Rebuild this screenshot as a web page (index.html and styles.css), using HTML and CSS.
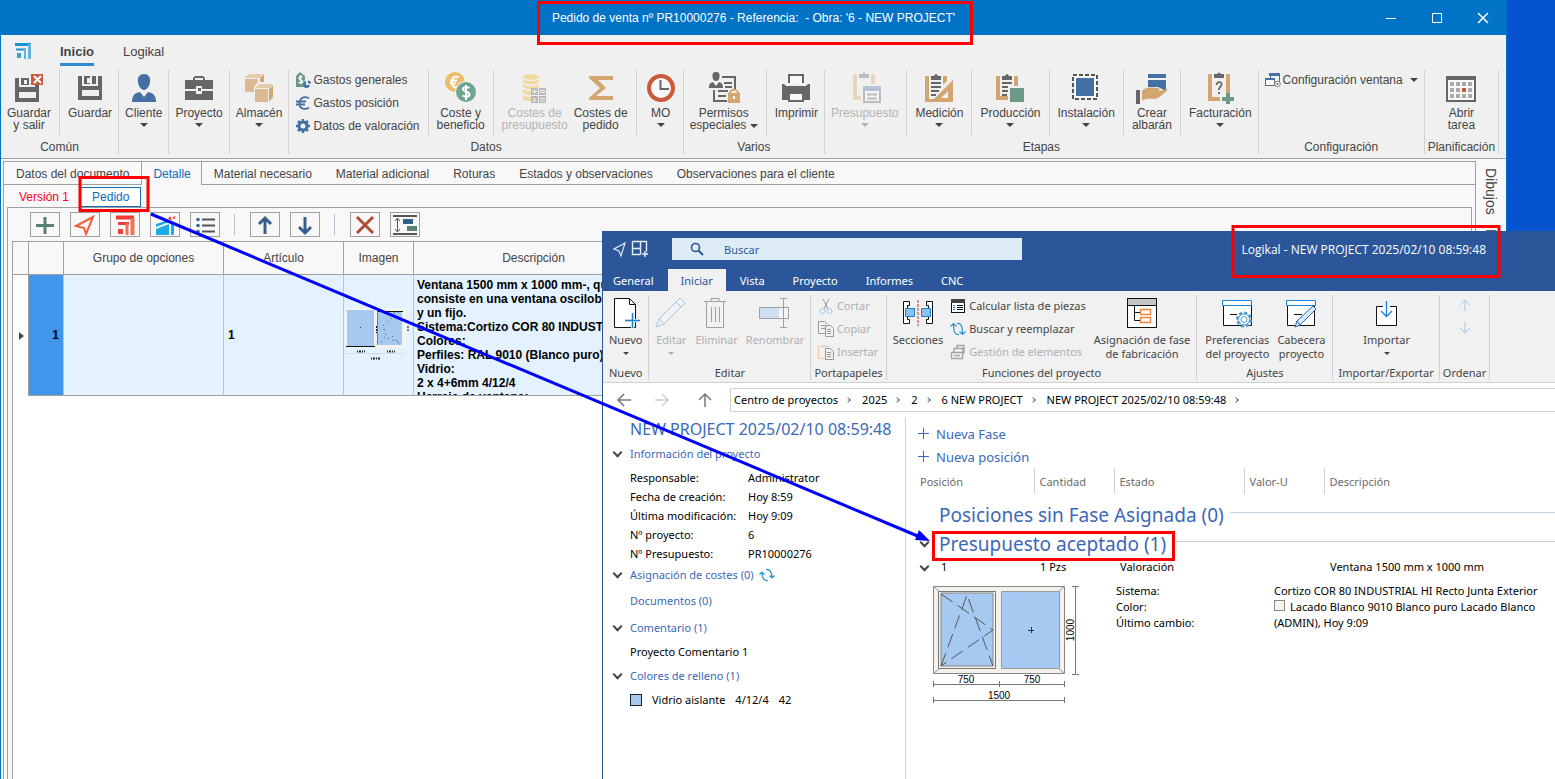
FILE: index.html
```html
<!DOCTYPE html>
<html lang="es">
<head>
    <meta charset="UTF-8">
    <meta name="viewport" content="width=device-width, initial-scale=1.0">
    <title>Pedido de venta nº PR10000276</title>
    <link rel="stylesheet" href="styles.css">
</head>
<body>
<main class="desktop">

    <!-- Ventana del pedido -->
    <section class="erp">
        <header class="erp-title">
            <h1>Pedido de venta nº PR10000276 - Referencia:&nbsp; - Obra: '6 - NEW PROJECT'</h1>
            <div class="win-controls">
                <button aria-label="Minimizar"><svg width="12" height="12"><path d="M1 6.500h10" stroke="#fff"/></svg></button>
                <button aria-label="Maximizar"><svg width="12" height="12"><rect x="1.500" y="1.500" width="9" height="9" fill="none" stroke="#fff"/></svg></button>
                <button aria-label="Cerrar"><svg width="12" height="12"><path d="M1 1l10 10M11 1L1 11" stroke="#fff" stroke-width="1.500"/></svg></button>
            </div>
        </header>

        <nav class="erp-menu">
            <svg class="logo" width="16" height="16"><path d="M0 1.500h16" stroke="#1496d4" stroke-width="3"/><path d="M14.500 1v15" stroke="#63b5dc" stroke-width="3"/><path d="M1 6.500h10" stroke="#1496d4" stroke-width="2"/><path d="M10 6v10" stroke="#63b5dc" stroke-width="2"/><path d="M2 10h4v5H2z" fill="#3aa3d6"/></svg>
            <a href="#" class="active">Inicio</a>
            <a href="#">Logikal</a>
        </nav>

        <div class="ribbon">
            <div class="group">
                <div class="items">
                    <button class="big">
                        <svg width="32" height="32"><path d="M2 6h4v9h16v-4h4v19H2z" fill="#666"/><path d="M8 6h8v7H8z" fill="#666"/><path d="M11 8h3v4h-3zM6 20h17v6H6z" fill="#f0f0f0"/><path d="M18 2h12v11H18z" fill="#c75b3c"/><path d="M21 4l7 7m0-7l-7 7" stroke="#fff" stroke-width="2"/></svg>
                        <span>Guardar<br>y salir</span>
                    </button>
                    <i class="sep"></i>
                    <button class="big">
                        <svg width="32" height="32"><path d="M4 4h4v10h16V4h4v24H4z" fill="#666"/><path d="M10 4h12v8H10z" fill="#666"/><path d="M13 6h3v5h-3zM16 4h2v8h-2zM8 18h17v6H8z" fill="#f0f0f0"/></svg>
                        <span>Guardar</span>
                    </button>
                </div>
                <p class="group-name">Común</p>
            </div>
            <div class="group">
                <div class="items">
                    <button class="big">
                        <svg width="32" height="32"><path d="M16 2c4 0 7 3 6 8-.5 4-3 8-6 8s-5.500-4-6-8c-1-5 2-8 6-8z" fill="#4470a3"/><path d="M4 30c0-7 3-9 8-10l4 5 4-5c5 1 8 3 8 10z" fill="#4470a3"/></svg>
                        <span>Cliente</span><i class="caret"></i>
                    </button>
                </div>
            </div>
            <div class="group">
                <div class="items">
                    <button class="big">
                        <svg width="32" height="32"><path d="M2 8h8V6l2-2h8l2 2v2h8v9H19v-3h-6v3H2zM2 19h11v3h6v-3h11v9H2z" fill="#666"/><path d="M12 6h8v2h-8z" fill="#f0f0f0"/><path d="M15 16h3v3h-3z" fill="#666"/></svg>
                        <span>Proyecto</span><i class="caret"></i>
                    </button>
                </div>
            </div>
            <div class="group">
                <div class="items">
                    <button class="big">
                        <svg width="32" height="32"><path d="M6 2h14l-4 4H2z" fill="#e5cba9"/><path d="M2 7h13v3l-4 5v5H2z" fill="#dcb992"/><path d="M17 6l4-4v8h-4z" fill="#d3a571"/><path d="M16 12h14l-4 4H12z" fill="#e5cba9"/><path d="M12 17h13v13H12z" fill="#dcb992"/><path d="M26 17l4-4v12l-4 5z" fill="#d3a571"/></svg>
                        <span>Almacén</span><i class="caret"></i>
                    </button>
                </div>
            </div>
            <div class="group">
                <div class="items">
                    <div class="list">
                        <button class="small"><svg width="16" height="16"><path d="M1 4l4-4 5 4v11H1z" fill="#6a9a87"/><path d="M7.500 5C5 4 3.500 5 4 6.500S8 8 7.500 10 4.500 11 3.500 10M5.700 3v9" fill="none" stroke="#fff" stroke-width="1.200"/><circle cx="12" cy="12" r="4" fill="#f0f0f0"/><path d="M11 9v4h4a3.500 3.500 0 1 1-4-4zM13 8.500a3 3 0 0 1 3 3h-3z" fill="#4470a3"/></svg>Gastos generales</button>
                        <button class="small"><svg width="16" height="16"><path d="M14 3.500C12 1.500 5 1 4.500 8S11 14.500 14 12.500M1 6.500h10M1 9.500h9" fill="none" stroke="#4470a3" stroke-width="1.800"/></svg>Gastos posición</button>
                        <button class="small"><svg width="16" height="16"><circle cx="8" cy="8" r="4" fill="none" stroke="#4470a3" stroke-width="3"/><path d="M8 1v3M8 12v3M1 8h3M12 8h3M3 3l2 2M11 11l2 2M3 13l2-2M11 5l2-2" stroke="#4470a3" stroke-width="2.500"/></svg>Datos de valoración</button>
                    </div>
                    <i class="sep"></i>
                    <button class="big">
                        <svg width="32" height="32"><circle cx="10" cy="10" r="10" fill="#ecbd69"/><path d="M14 5.500c-3-2-7-1-7 4.500s4 6.500 7 4.500M5 8.500h7M5 11.500h6" fill="none" stroke="#fff" stroke-width="2"/><circle cx="21" cy="20" r="11" fill="#f0f0f0"/><circle cx="21" cy="20" r="10" fill="#6fa58f"/><path d="M24.500 16c-2-1.500-7-1-6.500 1.500s7 2 6.500 5-5 2.500-7 1M21 13v15" fill="none" stroke="#fff" stroke-width="2"/></svg>
                        <span>Coste y<br>beneficio</span>
                    </button>
                    <i class="sep"></i>
                    <button class="big off">
                        <svg width="32" height="32"><g fill="#f3d9a0"><ellipse cx="12" cy="5" rx="8" ry="3"/><path d="M4 7c3 3 13 3 16 0v3c-3 3-13 3-16 0zM4 12c3 3 13 3 16 0v3c-3 3-13 3-16 0zM4 17c3 2 6 2 8 2v4c-3 0-6 0-8-2zM4 23c3 2 6 2 8 2v4c-3 0-6 0-8-2z"/></g><path d="M12 16h15v15H12z" fill="#b9b9b9"/><path d="M19.500 16v15M12 23.500h15M13 19.500h5M15.500 17v5M21 18.500h5M21 20.500h5M14 26l3 4m0-4l-3 4M21 26.500h5M21 29h5" stroke="#f0f0f0"/></svg>
                        <span>Costes de<br>presupuesto</span>
                    </button>
                    <button class="big">
                        <svg width="32" height="32"><path d="M4 4h24v4H13l8 8-10 8h17v4H4v-2l11-10L4 6z" fill="#d3a571"/></svg>
                        <span>Costes de<br>pedido</span>
                    </button>
                    <i class="sep"></i>
                    <button class="big">
                        <svg width="32" height="32"><circle cx="16" cy="16" r="12" fill="#f8f8f8" stroke="#c75b3c" stroke-width="4"/><path d="M15.500 8v9H24" fill="none" stroke="#666" stroke-width="2"/></svg>
                        <span>MO</span><i class="caret"></i>
                    </button>
                </div>
                <p class="group-name">Datos</p>
            </div>
            <div class="group">
                <div class="items">
                    <button class="big">
                        <svg width="32" height="32"><path d="M8 0c3 0 4 2 3.500 5S10 9 8 9 5 8 4.500 5 5 0 8 0z" fill="#666"/><path d="M1 16c0-4 1-5 4-6l3 4 3-4c3 1 4 2 4 6z" fill="#666"/><path d="M14 5h13v12M16 11h8M17 15h7M6 18v11h13M10 19h10M10 24h8" fill="none" stroke="#666" stroke-width="2"/><path d="M20 21h12v10H20z" fill="#d3a571"/><path d="M22 22v-2q4-5 8 0v2" fill="none" stroke="#d3a571" stroke-width="2"/><path d="M25 24h2v3h-2z" fill="#fff"/></svg>
                        <span>Permisos<br>especiales <i class="tri"></i></span>
                    </button>
                    <i class="sep"></i>
                    <button class="big">
                        <svg width="32" height="32"><path d="M9 11V3h14v8" fill="#f8f8f8" stroke="#666" stroke-width="2"/><path d="M2 12h2l2 2h20l2-2h2v16H2z" fill="#666"/><path d="M9 21h14v8H9z" fill="#f8f8f8" stroke="#666" stroke-width="2"/></svg>
                        <span>Imprimir</span>
                    </button>
                </div>
                <p class="group-name">Varios</p>
            </div>
            <div class="group">
                <div class="items">
                    <button class="big off">
                        <svg width="32" height="32"><path d="M4 2h4v22h4v4H4zM22 2h4v10h-4z" fill="#ead6c0"/><path d="M10 2h3q2-3 4 0h3v4H10z" fill="#bcbcbc"/><path d="M15 16h16v14H15z" fill="#f4f4f4" stroke="#bbb" stroke-width="2"/><path d="M14 14h18v5H14z" fill="#b4c3d6"/><path d="M18 22.500h10M18 26.500h10" stroke="#bbb" stroke-width="2"/></svg>
                        <span>Presupuesto</span><i class="caret"></i>
                    </button>
                    <i class="sep"></i>
                    <button class="big">
                        <svg width="32" height="32"><path d="M2 4h4v23h6l-2 3H2zM20 4h4v5l-4 4z" fill="#d3a571"/><path d="M8 4h3q2-4 4 0h3v4H8z" fill="#666"/><path d="M8 11h10M8 15h10M8 19h8M8 23h5" stroke="#666" stroke-width="2"/><path d="M30 8v22H8zM25 19l-7 7h7z" fill="#d3a571" fill-rule="evenodd"/></svg>
                        <span>Medición</span><i class="caret"></i>
                    </button>
                    <i class="sep"></i>
                    <button class="big">
                        <svg width="32" height="32"><path d="M2 4h4v20h8v4H2zM20 4h4v10h-4z" fill="#d3a571"/><path d="M8 4h3q2-4 4 0h3v4H8z" fill="#666"/><path d="M8 11h10M8 15h6M8 19h6M8 23h5" stroke="#666" stroke-width="2"/><path d="M16 16h14v14H16z" fill="#6a9a87"/></svg>
                        <span>Producción</span><i class="caret"></i>
                    </button>
                    <i class="sep"></i>
                    <button class="big">
                        <svg width="32" height="32"><rect x="3" y="3" width="24" height="24" fill="#f8f8f8" stroke="#555" stroke-width="2" stroke-dasharray="4 2"/><path d="M6 6h18v18H6z" fill="#4470a3"/></svg>
                        <span>Instalación</span><i class="caret"></i>
                    </button>
                    <i class="sep"></i>
                    <button class="big">
                        <svg width="32" height="32"><path d="M12 2h18v4H12zM12 8h18v11l-8-4H12z" fill="#4470a3"/><path d="M0 18h4v14H0z" fill="#666"/><path d="M6 19c5-5 9-3 16-3 2 0 2 3 0 3h-5 6l8-2c2 1-5 6-9 9-7 2-11-1-16 3z" fill="#d3a571"/></svg>
                        <span>Crear<br>albarán</span>
                    </button>
                    <i class="sep"></i>
                    <button class="big">
                        <svg width="32" height="32"><path d="M4 2h4v23h8v4H4zM22 2h4v20h-4z" fill="#d3a571"/><path d="M10 2h3q2-3 4 0h3v4H10z" fill="#666"/><path d="M12.500 13c0-4 6-3.500 5 0-.5 1.500-2.500 2-2.500 5M15 20v2" fill="none" stroke="#666" stroke-width="1.800"/><path d="M24 21v12M18 27h12" stroke="#6a9a87" stroke-width="4"/></svg>
                        <span>Facturación</span><i class="caret"></i>
                    </button>
                </div>
                <p class="group-name">Etapas</p>
            </div>
            <div class="group">
                <div class="items">
                    <div class="list">
                        <button class="small"><svg width="16" height="16"><path d="M5.500 9V2h9v8" fill="none" stroke="#666"/><path d="M4 1h11v3H4z" fill="#4470a3"/><rect x=".5" y="6.500" width="9" height="7" fill="#f8f8f8" stroke="#666"/><path d="M0 6h10v2H0z" fill="#4470a3"/><circle cx="12.500" cy="12" r="2.800" fill="#f8f8f8" stroke="#888"/><circle cx="12.500" cy="12" r="1" fill="#666"/></svg>Configuración ventana<i class="tri"></i></button>
                    </div>
                </div>
                <p class="group-name">Configuración</p>
            </div>
            <div class="group">
                <div class="items">
                    <button class="big">
                        <svg width="32" height="32"><rect x="2" y="5" width="28" height="24" fill="#f8f8f8" stroke="#666" stroke-width="2"/><path d="M1 4h30v4H1z" fill="#666"/><path d="M5 12h22M5 18h22M5 24h22" stroke="#aaa" stroke-width="4" stroke-dasharray="4 2"/><path d="M17 16h4v4h-4z" fill="#c75b3c"/></svg>
                        <span>Abrir<br>tarea</span>
                    </button>
                </div>
                <p class="group-name">Planificación</p>
            </div>
        </div>

        <div class="erp-body">
            <div class="doc">
                <nav class="tabs">
                    <a href="#">Datos del documento</a>
                    <a href="#" class="active">Detalle</a>
                    <a href="#">Material necesario</a>
                    <a href="#">Material adicional</a>
                    <a href="#">Roturas</a>
                    <a href="#">Estados y observaciones</a>
                    <a href="#">Observaciones para el cliente</a>
                </nav>
                <div class="doc-inner">
                    <nav class="versions">
                        <a href="#" class="version">Versión 1</a>
                        <a href="#" class="order">Pedido</a>
                    </nav>
                    <div class="detail">
                        <div class="toolbar">
                            <button aria-label="Añadir"><svg width="24" height="22"><path d="M12 3v17M3 11.500h18" stroke="#588170" stroke-width="3"/></svg></button>
                            <button aria-label="Enviar"><svg width="24" height="22"><path d="M20 3L3 12l8 2 2 6z" fill="none" stroke="#f55f38" stroke-width="2"/></svg></button>
                            <button aria-label="Logikal"><svg width="24" height="22"><path d="M3 3.500h18" stroke="#f03b36" stroke-width="4"/><path d="M19.500 4v17" stroke="#f3725a" stroke-width="4"/><path d="M5 9.500h11" stroke="#f03b36" stroke-width="3"/><path d="M14 9v12" stroke="#f3725a" stroke-width="3"/><path d="M5 15h5v5H5z" fill="#e8453a"/></svg></button>
                            <button aria-label="Actualizar dibujo"><svg width="24" height="22"><path d="M3 10l12-4 1 2-13 5zM3 15l13-5v11H3zM18 9l3-1v13h-3z" fill="#1fabe6"/><path d="M15 5l2-3 2 4zM19 4l3-2v3z" fill="#ee3b33"/></svg></button>
                            <button aria-label="Lista"><svg width="24" height="22"><path d="M9 5.500h13M9 11.500h13M9 17.500h13" stroke="#555" stroke-width="2"/><g fill="#3c6493"><circle cx="5" cy="5.500" r="1.800"/><circle cx="5" cy="11.500" r="1.800"/><circle cx="5" cy="17.500" r="1.800"/></g></svg></button>
                            <i class="bar"></i>
                            <button aria-label="Subir"><svg width="24" height="22"><path d="M12 20V4M6 10l6-6 6 6" fill="none" stroke="#355f8f" stroke-width="3"/></svg></button>
                            <button aria-label="Bajar"><svg width="24" height="22"><path d="M12 3v16M6 13l6 6 6-6" fill="none" stroke="#355f8f" stroke-width="3"/></svg></button>
                            <i class="bar"></i>
                            <button aria-label="Eliminar"><svg width="24" height="22"><path d="M4 3l16 16M20 3L4 19" stroke="#b04a32" stroke-width="3"/></svg></button>
                            <button aria-label="Ajustar"><svg width="24" height="22"><path d="M0 2h24M0 20h24" stroke="#555" stroke-width="2"/><path d="M4.500 5v12M2 7l2.500-3L7 7M2 15l2.500 3L7 15" fill="none" stroke="#555"/><path d="M10 5h10v5H10z" fill="#355f8f"/><path d="M14 12h10v5H14z" fill="#588170"/></svg></button>
                        </div>
                        <div class="grid-wrap">
                            <table class="grid">
                                <colgroup><col class="w-mark"><col class="w-num"><col class="w-opt"><col class="w-art"><col class="w-img"><col class="w-desc"></colgroup>
                                <thead>
                                    <tr><th></th><th></th><th>Grupo de opciones</th><th>Artículo</th><th>Imagen</th><th>Descripción</th></tr>
                                </thead>
                                <tbody>
                                    <tr>
                                        <td class="mark"><svg width="5" height="8"><path d="M0 0l5 4-5 4z" fill="#444"/></svg></td>
                                        <td class="num">1</td>
                                        <td></td>
                                        <td class="art">1</td>
                                        <td class="thumb">
                                            <svg width="66" height="54"><path d="M0 0h61v40H0z" fill="#f3f3f0"/><path d="M2 2h27v36H2zM33 3h24v34H33z" fill="#a5c9f1"/><path d="M1 38.500h29M33 3.500h25" stroke="#111"/><path d="M32.500 3v34" stroke="#777"/><path d="M44 6l10-2-16 14 4 12 14 5M36 34l4-5M47 28l8 9M15.500 19v3" fill="none" stroke="#345" stroke-dasharray="1 4"/><path d="M31.500 18v7M63 18v6" stroke="#111" stroke-dasharray="2 1"/><path d="M12 43.500h8M42 43.500h8M26 50.500h10" stroke="#222" stroke-width="2" stroke-dasharray="1 1 2 1"/><path d="M0 45.500h60" stroke="#d5deea"/></svg>
                                        </td>
                                        <td class="desc"><div>Ventana 1500 mm x 1000 mm-, qu<br>consiste en una ventana oscilob<br>y un fijo.<br>Sistema:Cortizo COR 80 INDUST<br>Colores:<br>Perfiles: RAL 9010 (Blanco puro)<br>Vidrio:<br>2 x 4+6mm 4/12/4<br>Herraje de ventana:</div></td>
                                    </tr>
                                </tbody>
                            </table>
                        </div>
                    </div>
                </div>
            </div>
            <aside class="side"><a href="#">Dibujos</a><a href="#">D</a></aside>
        </div>
    </section>

    <!-- Ventana de Logikal -->
    <section class="logikal">
        <header class="lk-title">
            <svg width="36" height="18"><path d="M12 3L1 9l5 2 2 5z" fill="none" stroke="#dfe8f5" stroke-width="1.200"/><path d="M19.500 1.500h14v10M19.500 1.500v13h8M27.500 1.500v13M19.500 8.500h8M32 11v6M29 14h6" fill="none" stroke="#e6edf7" stroke-width="1.400"/></svg>
            <label class="search">
                <svg width="14" height="14"><circle cx="5.500" cy="5.500" r="4" fill="none" stroke="#2b579a" stroke-width="1.600"/><path d="M8.500 8.500l4.500 4.500" stroke="#2b579a" stroke-width="2"/></svg>
                <input type="text" placeholder="Buscar" aria-label="Buscar">
            </label>
            <h2>Logikal - NEW PROJECT 2025/02/10 08:59:48</h2>
        </header>
        <nav class="lk-tabs">
            <a href="#">General</a>
            <a href="#" class="active">Iniciar</a>
            <a href="#">Vista</a>
            <a href="#">Proyecto</a>
            <a href="#">Informes</a>
            <a href="#">CNC</a>
        </nav>

        <div class="lk-ribbon">
            <div class="lk-group">
                <div class="items">
                    <button class="lk-big">
                        <svg width="32" height="32"><path d="M4.500 1.500h15l6 6v23h-21z" fill="#fff" stroke="#111"/><path d="M19.500 1.500v6h6" fill="none" stroke="#111"/><path d="M22.500 16v15M15 23.500h15" stroke="#f1f1f1" stroke-width="3"/><path d="M22.500 16v15M15 23.500h15" stroke="#1883d0" stroke-width="1.400"/></svg>
                        <span>Nuevo</span><i class="caret"></i>
                    </button>
                </div>
                <p class="group-name">Nuevo</p>
            </div>
            <div class="lk-group">
                <div class="items">
                    <button class="lk-big off">
                        <svg width="32" height="32"><path d="M1 30l3-8L25 1l5 5L9 27zM4 22l5 5M21 5l5 5" fill="#eef4fa" stroke="#a8c5de"/></svg>
                        <span>Editar</span><i class="caret"></i>
                    </button>
                    <button class="lk-big off">
                        <svg width="32" height="32"><path d="M3 4.500h22M10 4V1.500h8V4M5.500 5v25.500h17V5M10.500 10v15M14.500 10v15M18.500 10v15" fill="none" stroke="#a0a0a0"/></svg>
                        <span>Eliminar</span>
                    </button>
                    <button class="lk-big off">
                        <svg width="32" height="32"><path d="M.5 10.500h29v11H.5z" fill="#f4f4f4" stroke="#a0a0a0"/><path d="M1 11h19v10H1z" fill="#cde1f2"/><path d="M24.500 1v30M21 1.500h7M21 30.500h7" stroke="#a0a0a0"/></svg>
                        <span>Renombrar</span>
                    </button>
                </div>
                <p class="group-name">Editar</p>
            </div>
            <div class="lk-group">
                <div class="items">
                    <div class="lk-list">
                        <button class="off"><svg width="16" height="16"><path d="M5 1l5 10M11 1L6 11" stroke="#999"/><circle cx="4.500" cy="13" r="2.500" fill="none" stroke="#9fc6e5"/><circle cx="11.500" cy="13" r="2.500" fill="none" stroke="#9fc6e5"/></svg>Cortar</button>
                        <button class="off"><svg width="16" height="16"><path d="M7 12.500H.5V.5h6l3 3M3 4.500h4M3 7.500h4M7.500 4.500h5l3 3v8h-8zM9 8.500h4M9 10.500h4M9 12.500h4" fill="none" stroke="#999"/></svg>Copiar</button>
                        <button class="off"><svg width="16" height="16"><path d="M7 14.500H.5V2.500h11" fill="none" stroke="#f0c6a4"/><path d="M3.500 3.500V1h5v2.500z" fill="#ddd"/><path d="M7.500 4.500h5l3 3v8h-8zM9 8.500h4M9 10.500h4M9 12.500h4" fill="none" stroke="#999"/></svg>Insertar</button>
                    </div>
                </div>
                <p class="group-name">Portapapeles</p>
            </div>
            <div class="lk-group">
                <div class="items">
                    <button class="lk-big">
                        <svg width="32" height="32"><path d="M1.500 4.500h6v4h-2v14h2v4h-6zM30.500 4.500h-6v4h2v14h-2v4h6z" fill="#fff" stroke="#111"/><path d="M3.500 11.500h9v8h-9zM19.500 11.500h9v8h-9z" fill="#8cc1ec" stroke="#1883d0"/><path d="M16 3v26" stroke="#e02020" stroke-dasharray="3 1"/></svg>
                        <span>Secciones</span>
                    </button>
                    <div class="lk-list">
                        <button><svg width="16" height="16"><rect x="1.500" y="1.500" width="13" height="13" fill="#fff" stroke="#111"/><path d="M1 1h14v4H1z" fill="#444"/><path d="M7 7.500h6M7 9.500h6M7 11.500h6" stroke="#111"/><path d="M3 7.500h2M3 9.500h2M3 11.500h2" stroke="#1883d0"/></svg>Calcular lista de piezas</button>
                        <button><svg width="16" height="16"><path d="M9 13.500C5 14 3.500 11 3.500 3M.5 5.500L3.500 2.500l3 3M7 2.500C11 2 12.500 5 12.500 13M9.500 10.500l3 3 3-3" fill="none" stroke="#2b8fd0" stroke-width="1.200"/></svg>Buscar y reemplazar</button>
                        <button class="off"><svg width="16" height="16"><path d="M1.500 8.500h11v6h-11zM4 8V4.500h9V11M7 4V1.500h7V9M4 11.500h6" fill="none" stroke="#a5a5a5" stroke-width="1.400"/></svg>Gestión de elementos</button>
                    </div>
                    <button class="lk-big">
                        <svg width="32" height="32"><rect x="1.500" y="1.500" width="29" height="29" fill="#fff" stroke="#111"/><path d="M2 2h28v6H2z" fill="#c6c6c6"/><path d="M2 8.500h28M8.500 9v14.500H14M8.500 15.500H14" fill="none" stroke="#111"/><path d="M14.500 12.500h10v5h-10zM14.500 20.500h10v5h-10z" fill="#fff" stroke="#e8873c" stroke-width="1.400"/></svg>
                        <span>Asignación de fase<br>de fabricación</span>
                    </button>
                </div>
                <p class="group-name">Funciones del proyecto</p>
            </div>
            <div class="lk-group wide">
                <div class="items">
                    <button class="lk-big">
                        <svg width="32" height="32"><path d="M2.500 8v20.500h28V8" fill="#fff" stroke="#111"/><path d="M1.500 3.500h29v5h-29z" fill="#fff" stroke="#1883d0"/><path d="M9 17.500h7" stroke="#111"/><circle cx="23" cy="22.500" r="6.500" fill="#fff" stroke="#4c9ad2" stroke-width="3" stroke-dasharray="3 2"/><circle cx="23" cy="22.500" r="5.500" fill="#fff" stroke="#4c9ad2"/><circle cx="23" cy="22.500" r="3" fill="none" stroke="#4c9ad2"/></svg>
                        <span>Preferencias<br>del proyecto</span>
                    </button>
                    <button class="lk-big">
                        <svg width="32" height="32"><path d="M2.500 8v20.500h27V8" fill="#fff" stroke="#111"/><path d="M1.500 3.500h29v5h-29z" fill="#fff" stroke="#1883d0"/><path d="M9 17.500h8" stroke="#111"/><path d="M10 30l2-6L28 9l3 3-16 16zM12 24l3 4" fill="#d8e8f6" stroke="#2b6cb0"/></svg>
                        <span>Cabecera<br>proyecto</span>
                    </button>
                </div>
                <p class="group-name">Ajustes</p>
            </div>
            <div class="lk-group wide">
                <div class="items">
                    <button class="lk-big">
                        <svg width="32" height="32"><path d="M12 9.500H5.500v19h20v-19H19" fill="#fff" stroke="#111"/><path d="M15.500 4v15M10 14l5.500 5.500L21 14" fill="none" stroke="#1883d0" stroke-width="1.300"/></svg>
                        <span>Importar</span><i class="caret"></i>
                    </button>
                </div>
                <p class="group-name">Importar/Exportar</p>
            </div>
            <div class="lk-group">
                <div class="items">
                    <div class="lk-order">
                        <button aria-label="Ordenar hacia arriba"><svg width="12" height="12"><path d="M6 12V1M1 6l5-5 5 5" fill="none" stroke="#9cc9e8"/></svg></button>
                        <button aria-label="Ordenar hacia abajo"><svg width="12" height="12"><path d="M6 0v11M1 6l5 5 5-5" fill="none" stroke="#9cc9e8"/></svg></button>
                    </div>
                </div>
                <p class="group-name">Ordenar</p>
            </div>
        </div>

        <div class="lk-path">
            <button aria-label="Atrás"><svg width="16" height="14"><path d="M15 7H2M8 1L2 7l6 6" fill="none" stroke="#777" stroke-width="1.500"/></svg></button>
            <button aria-label="Adelante"><svg width="16" height="14"><path d="M1 7h13M8 1l6 6-6 6" fill="none" stroke="#d0d0d0" stroke-width="1.500"/></svg></button>
            <button aria-label="Arriba"><svg width="14" height="16"><path d="M7 15V2M1 8l6-6 6 6" fill="none" stroke="#777" stroke-width="1.500"/></svg></button>
            <nav class="crumbs">
                <a href="#">Centro de proyectos</a>
                <a href="#">2025</a>
                <a href="#">2</a>
                <a href="#">6 NEW PROJECT</a>
                <a href="#">NEW PROJECT 2025/02/10 08:59:48</a>
            </nav>
        </div>

        <div class="lk-body">
            <aside class="info">
                <h3>NEW PROJECT 2025/02/10 08:59:48</h3>
                <h4 class="open">Información del proyecto</h4>
                <dl>
                    <dt>Responsable:</dt><dd>Administrator</dd>
                    <dt>Fecha de creación:</dt><dd>Hoy 8:59</dd>
                    <dt>Última modificación:</dt><dd>Hoy 9:09</dd>
                    <dt>Nº proyecto:</dt><dd>6</dd>
                    <dt>Nº Presupuesto:</dt><dd>PR10000276</dd>
                </dl>
                <h4 class="open">Asignación de costes (0) <svg width="16" height="14"><path d="M9 12.500C5 13 3 10 3 4M.5 6.500L3 4l2.500 2.500M7 1.500C11 1 13 4 13 10M10.500 7.500L13 10l2.500-2.500" fill="none" stroke="#1f8fce" stroke-width="1.200"/></svg></h4>
                <h4>Documentos (0)</h4>
                <h4 class="open">Comentario (1)</h4>
                <p>Proyecto Comentario 1</p>
                <h4 class="open">Colores de relleno (1)</h4>
                <p class="fill"><i class="swatch"></i><span>Vidrio aislante</span><span>4/12/4</span><span>42</span></p>
            </aside>

            <div class="positions">
                <div class="actions">
                    <button>Nueva Fase</button>
                    <button>Nueva posición</button>
                </div>
                <table>
                    <colgroup><col class="c-pos"><col class="c-qty"><col class="c-state"><col class="c-u"><col></colgroup>
                    <thead>
                        <tr><th>Posición</th><th>Cantidad</th><th>Estado</th><th>Valor-U</th><th>Descripción</th></tr>
                    </thead>
                    <tbody>
                        <tr class="phase"><td colspan="5"><h3>Posiciones sin Fase Asignada (0)</h3></td></tr>
                        <tr class="phase"><td colspan="5"><h3 class="open">Presupuesto aceptado (1)</h3></td></tr>
                        <tr class="item"><td class="open">1</td><td>1 Pzs</td><td>Valoración</td><td></td><td>Ventana 1500 mm x 1000 mm</td></tr>
                        <tr class="more">
                            <td colspan="2">
                                <svg width="148" height="122">
                                    <path d="M.5 1.500h131v87H.5z" fill="#f4f1ea" stroke="#888"/>
                                    <path d="M.5 1.500l6 5M131.500 1.500l-6 5M.5 88.500l6-5M131.500 88.500l-6-5" stroke="#999"/>
                                    <path d="M5.500 6.500h57v77h-57z" fill="#f4f1ea" stroke="#777"/>
                                    <path d="M8 8h52v73H8z" fill="#a5c9f1" stroke="#888"/>
                                    <path d="M68.500 6.500h58v77h-58z" fill="#a5c9f1" stroke="#999"/>
                                    <path d="M8 9l52 36L8 81M8 81L34 10l26 71" fill="none" stroke="#555" stroke-dasharray="14 6"/>
                                    <path d="M98.500 42v6M95 45.500h6" stroke="#333"/>
                                    <path d="M142.500 1v88M139 1.500h7M139 89.500h7M0 99.500h132M.5 96v6M66.500 96v6M131.500 96v6M0 115.500h132M.5 112v6M131.500 112v6" stroke="#777"/>
                                    <g class="dim"><text x="33" y="98">750</text><text x="99" y="98">750</text><text x="66" y="114">1500</text><text transform="rotate(-90 140 45)" x="140" y="46">1000</text></g>
                                </svg>
                            </td>
                            <td colspan="3">
                                <dl>
                                    <dt>Sistema:</dt><dd>Cortizo COR 80 INDUSTRIAL HI Recto Junta Exterior</dd>
                                    <dt>Color:</dt><dd><i class="chip"></i>Lacado Blanco 9010 Blanco puro Lacado Blanco</dd>
                                    <dt>Último cambio:</dt><dd>(ADMIN), Hoy 9:09</dd>
                                </dl>
                            </td>
                        </tr>
                    </tbody>
                </table>
            </div>
        </div>
    </section>

    <!-- Marcas sobre las dos ventanas -->
    <svg class="marks" width="1555" height="779">
        <g fill="none" stroke="#ff0000" stroke-width="3">
            <rect x="538.500" y="2.500" width="433" height="41"/>
            <rect x="80" y="177.500" width="68" height="33"/>
            <rect x="1233" y="226.500" width="266" height="50"/>
            <rect x="933.500" y="532.500" width="240" height="27"/>
        </g>
        <path d="M151 214L920 537" stroke="#0000ff" stroke-width="3"/>
        <path d="M930 541L915 540l4-10z" fill="#0000ff"/>
    </svg>
</main>
</body>
</html>
```
FILE: styles.css
```css
* {
    box-sizing: border-box;
}

body {
    margin: 0;
    font-family: "Liberation Sans", Arial, sans-serif;
    font-size: 12px;
    color: #444;
}

h1, h2, h3, h4, p, dl, dd {
    margin: 0;
    font-weight: normal;
}

a {
    color: inherit;
    text-decoration: none;
}

button {
    margin: 0;
    padding: 0;
    border: none;
    background: none;
    font: inherit;
    color: inherit;
    cursor: pointer;
}

svg {
    display: block;
    flex: none;
}

.desktop {
    position: relative;
    min-height: 100vh;
    overflow: hidden;
    background: #0553cf;
}

/* ventana del pedido */
.erp {
    position: absolute;
    top: 0;
    left: 0;
    right: 48px;
    bottom: 0;
    display: flex;
    flex-direction: column;
    border-left: 1px solid #0173c7;
    border-right: 1px solid #0173c7;
    background: #f8f8f8;
    white-space: nowrap;
}

.erp-title {
    display: grid;
    grid-template-columns: 1fr auto 1fr;
    align-items: center;
    height: 35px;
    background: #0173c7;
    color: #fff;
}

.erp-title h1 {
    grid-column: 2;
    font-size: 12px;
}

.win-controls {
    display: flex;
    justify-content: flex-end;
}

.win-controls button {
    display: flex;
    justify-content: center;
    width: 46px;
}

.erp-menu {
    display: flex;
    align-items: flex-start;
    height: 35px;
    padding: 8px 14px 0;
    background: #f0f0f0;
    font-size: 13px;
}

.erp-menu a {
    height: 23px;
    margin-left: 29px;
    line-height: 17px;
}

.erp-menu .active {
    border-bottom: 3px solid #2b8ad4;
    font-weight: bold;
}

.ribbon {
    display: flex;
    height: 89px;
    padding-bottom: 4px;
    border-bottom: 1px solid #a0a0a0;
    background: #f0f0f0;
}

.group,
.lk-group {
    display: flex;
    flex-direction: column;
    border-right: 1px solid #d0d0d0;
}

.items {
    display: flex;
    flex: 1;
    justify-content: center;
    align-items: flex-start;
}

.group-name {
    padding: 0 3px;
    line-height: 14px;
    text-align: center;
}

.sep {
    width: 1px;
    height: 65px;
    margin: 0 2px;
    background: #d0d0d0;
}

.big {
    display: flex;
    flex-direction: column;
    align-items: center;
    min-width: 44px;
    padding: 2px 6px 0;
    line-height: 12px;
}

.big + .big {
    margin-left: -6px;
}

.big > span {
    padding-top: 3px;
}

.off {
    color: #b4b4b4;
}

.caret {
    display: flex;
    justify-content: center;
    align-items: center;
    height: 12px;
}

.caret::before,
.tri {
    content: "";
    display: inline-block;
    border: 4px solid transparent;
    border-top-color: currentColor;
    border-bottom: none;
    vertical-align: middle;
}

.list {
    display: flex;
    flex-direction: column;
    margin-top: -2px;
    padding: 0 6px;
}

.small {
    display: flex;
    align-items: center;
    gap: 2px;
    height: 23px;
}

.small .tri {
    margin-left: 5px;
}

/* pestañas y detalle */
.erp-body {
    display: flex;
    flex: 1;
    min-height: 0;
    padding: 2px 0 0 2px;
}

.doc {
    display: flex;
    flex: 1;
    flex-direction: column;
    min-width: 0;
    border: 1px solid #a0a0a0;
    border-bottom: none;
}

.tabs {
    display: flex;
    height: 23px;
    border-bottom: 1px solid #a0a0a0;
}

.tabs a {
    height: 23px;
    padding: 0 12px;
    line-height: 24px;
}

.tabs .active {
    border: 1px solid #a0a0a0;
    border-width: 0 1px;
    background: #f8f8f8;
    padding: 0 10px 0 11px;
    color: #0f6cbd;
}

.doc-inner {
    display: flex;
    flex: 1;
    flex-direction: column;
    padding: 0 3px;
}

.versions {
    display: flex;
    align-items: center;
    gap: 11px;
    height: 22px;
    padding: 1px 0 0 12px;
}

.version {
    color: #ff0022;
}

.order {
    padding: 0 11px;
    border: 1px solid #0f6cbd;
    background: #fff;
    line-height: 18px;
    color: #0f6cbd;
}

.detail {
    display: flex;
    flex: 1;
    flex-direction: column;
    padding-left: 4px;
    border: 1px solid #a0a0a0;
    border-bottom: none;
}

.toolbar {
    display: flex;
    gap: 10px;
    padding: 4px 0 4px 18px;
}

.toolbar button {
    display: flex;
    justify-content: center;
    align-items: center;
    width: 30px;
    height: 25px;
    border: 1px solid #a0a0a0;
}

.bar {
    width: 1px;
    height: 21px;
    margin: 2px 5px 2px 4px;
    background: #b8bfc8;
}

.grid-wrap {
    flex: 1;
    border-left: 1px solid #a0a0a0;
    border-top: 1px solid #a0a0a0;
    background: #fff;
}

.grid {
    table-layout: fixed;
    width: 641px;
    border-collapse: separate;
    border-spacing: 0;
}

.w-mark {
    width: 16px;
}

.w-num {
    width: 35px;
}

.w-opt {
    width: 160px;
}

.w-art {
    width: 120px;
}

.w-img {
    width: 70px;
}

.w-desc {
    width: 240px;
}

.grid th {
    height: 33px;
    padding: 0;
    border-right: 1px solid #a0a0a0;
    border-bottom: 1px solid #a0a0a0;
    background: #f8f8f8;
    font-weight: normal;
}

.grid td {
    height: 121px;
    padding: 0;
    border-right: 1px solid #c4c4c4;
    border-bottom: 1px solid #a0a0a0;
    background: #e3f2fe;
    font-weight: bold;
    color: #000;
}

.grid td.mark {
    padding-left: 6px;
    border-right-color: #a0a0a0;
    border-bottom: none;
    background: #fff;
}

.grid td.num {
    padding-right: 4px;
    background: #4196ec;
    text-align: right;
}

.grid td.art {
    padding-left: 4px;
}

.grid td.thumb {
    padding-left: 1px;
}

.desc div {
    height: 120px;
    padding: 3px 0 0 3px;
    overflow: hidden;
    line-height: 14px;
}

.side {
    display: flex;
    flex-direction: column;
    gap: 14px;
    align-items: center;
    width: 30px;
    padding-top: 7px;
    font-size: 14px;
}

.side a {
    writing-mode: vertical-rl;
}

/* ventana de Logikal */
.logikal {
    position: absolute;
    top: 231px;
    left: 602px;
    right: 0;
    bottom: 0;
    display: flex;
    flex-direction: column;
    border-left: 1px solid #2b579a;
    background: #fff;
    font-family: "Noto Sans", "Open Sans", sans-serif;
    font-size: 11px;
    white-space: nowrap;
}

.lk-title {
    display: flex;
    align-items: center;
    height: 38px;
    padding: 0 69px 2px 10px;
    background: #2b579a;
    color: #fff;
}

.lk-title h2 {
    margin-left: auto;
    font-family: "Open Sans", "Noto Sans", sans-serif;
    font-size: 12px;
}

.search {
    display: flex;
    align-items: center;
    width: 350px;
    height: 22px;
    margin-left: 23px;
    padding-left: 18px;
    background: #deecf8;
}

.search input {
    flex: 1;
    padding: 0 0 0 20px;
    border: none;
    background: none;
    font: inherit;
    color: #2b579a;
}

.search input::placeholder {
    color: #2b579a;
    opacity: 1;
}

.lk-tabs {
    display: flex;
    height: 22px;
    background: #2b579a;
    color: #fff;
}

.lk-tabs a {
    padding: 0 14px;
    line-height: 24px;
}

.lk-tabs a:first-child {
    padding-left: 10px;
}

.lk-tabs .active {
    padding: 0 13px;
    background: #f1f1f1;
    color: #2b579a;
}

.lk-ribbon {
    display: flex;
    height: 92px;
    padding: 4px 0 2px;
    border-bottom: 1px solid #d0d0d0;
    background: #f1f1f1;
}

.lk-ribbon .items {
    padding: 0 2px;
}

.lk-ribbon .wide .items {
    padding: 0 3px 0 4px;
}

.wide .group-name {
    padding: 0 5px;
}

.lk-big {
    display: flex;
    flex-direction: column;
    align-items: center;
    padding: 2px 4px 0;
    line-height: 14px;
}

.lk-big > span {
    padding-top: 4px;
}

.lk-big .caret::before {
    border-width: 3px;
    border-bottom: none;
}

.lk-list {
    margin-top: -1px;
    padding: 0 4px 0 3px;
}

.lk-list button {
    display: flex;
    align-items: center;
    gap: 3px;
    height: 23px;
}

.lk-ribbon .off {
    color: #b0b0b0;
}

.lk-order {
    display: flex;
    flex-direction: column;
    gap: 11px;
    padding-top: 4px;
}

.lk-path {
    display: flex;
    align-items: center;
    height: 34px;
    padding-left: 13px;
}

.lk-path button {
    margin-right: 22px;
}

.lk-path button:nth-child(2) {
    margin-right: 28px;
}

.lk-path button:nth-child(3) {
    margin-right: 18px;
}

.crumbs {
    display: flex;
    flex: 1;
    height: 24px;
    border: 1px solid #d0d0d0;
    border-right: none;
    padding-left: 3px;
    line-height: 22px;
    color: #000;
}

.crumbs a::after {
    content: "";
    display: inline-block;
    width: 3px;
    height: 3px;
    margin: 0 12px 2px 8px;
    border: solid #666;
    border-width: 1px 1px 0 0;
    transform: rotate(45deg);
}

.lk-body {
    display: flex;
    flex: 1;
    color: #000;
}

.info {
    width: 303px;
    padding-left: 27px;
    border-right: 1px solid #d0d0d0;
    line-height: 19px;
}

.info h3 {
    font-size: 16px;
    line-height: 25px;
    color: #3b68b8;
}

.info h4 {
    display: flex;
    align-items: center;
    gap: 5px;
    font-size: 11px;
    line-height: 24px;
    color: #3b68b8;
}

.open::before {
    content: "";
    flex: none;
    width: 5px;
    height: 5px;
    margin: 0 11px 4px -16px;
    border: solid #444;
    border-width: 0 2px 2px 0;
    transform: rotate(45deg);
}

.info .open::before {
    margin-right: 4px;
}

.info dl {
    display: grid;
    grid-template-columns: 118px 1fr;
    padding: 2px 0 0;
}

.info dl + h4 + h4 {
    padding: 2px 0 3px;
}

.info p {
    line-height: 24px;
}

.fill {
    display: flex;
    align-items: center;
    gap: 10px;
}

.swatch {
    width: 12px;
    height: 12px;
    border: 1px solid #222;
    background: #a5c9f1;
}

.positions {
    flex: 1;
    min-width: 0;
    padding-top: 5px;
}

.actions {
    display: flex;
    flex-direction: column;
    align-items: flex-start;
    padding-left: 12px;
    font-size: 13px;
    color: #3b68b8;
}

.actions button {
    display: flex;
    align-items: center;
    gap: 7px;
    height: 23px;
}

.actions button::before {
    content: "";
    width: 11px;
    height: 11px;
    background:
        linear-gradient(#3b68b8, #3b68b8) center / 11px 1px no-repeat,
        linear-gradient(#3b68b8, #3b68b8) center / 1px 11px no-repeat;
}

.positions table {
    table-layout: fixed;
    width: 100%;
    border-collapse: collapse;
}

.c-pos {
    width: 128px;
}

.c-qty,
.c-u {
    width: 80px;
}

.c-state {
    width: 130px;
}

.positions th {
    height: 26px;
    padding: 0 5px;
    border-left: 1px solid #d0d0d0;
    font-weight: normal;
    text-align: left;
    color: #6a6a6a;
}

.positions th:first-child {
    padding-left: 14px;
    border: none;
}

.positions td {
    padding: 0 6px;
}

.positions .phase td {
    height: 29px;
    padding: 0 0 0 33px;
}

.positions .phase:first-child td {
    height: 35px;
    padding-top: 6px;
}

.phase h3 {
    display: flex;
    align-items: center;
    font-size: 19px;
    line-height: 28px;
    color: #3b68b8;
}

.phase h3::after {
    content: "";
    flex: 1;
    height: 1px;
    margin: 0 0 5px 6px;
    background: #c5d3e2;
}

.phase .open::before {
    margin: 0 11px 2px -18px;
}

.item td {
    height: 18px;
    line-height: 18px;
}

.item .open {
    display: flex;
    align-items: center;
    padding-left: 33px;
}

.item .open::before {
    margin: 0 13px 2px -18px;
}

.more td {
    vertical-align: top;
}

.positions .more td:first-child {
    padding-top: 9px;
    padding-left: 27px;
}

.positions .more td:last-child {
    padding-top: 7px;
    padding-left: 2px;
}

.more dl {
    display: grid;
    grid-template-columns: 158px 1fr;
    line-height: 16px;
}

.chip {
    display: inline-block;
    width: 11px;
    height: 11px;
    margin-right: 5px;
    border: 1px solid #888;
    background: #f7f4ee;
}

.dim {
    font: 10px "Liberation Sans", sans-serif;
    text-anchor: middle;
}

.marks {
    position: absolute;
    top: 0;
    left: 0;
    pointer-events: none;
}
```
